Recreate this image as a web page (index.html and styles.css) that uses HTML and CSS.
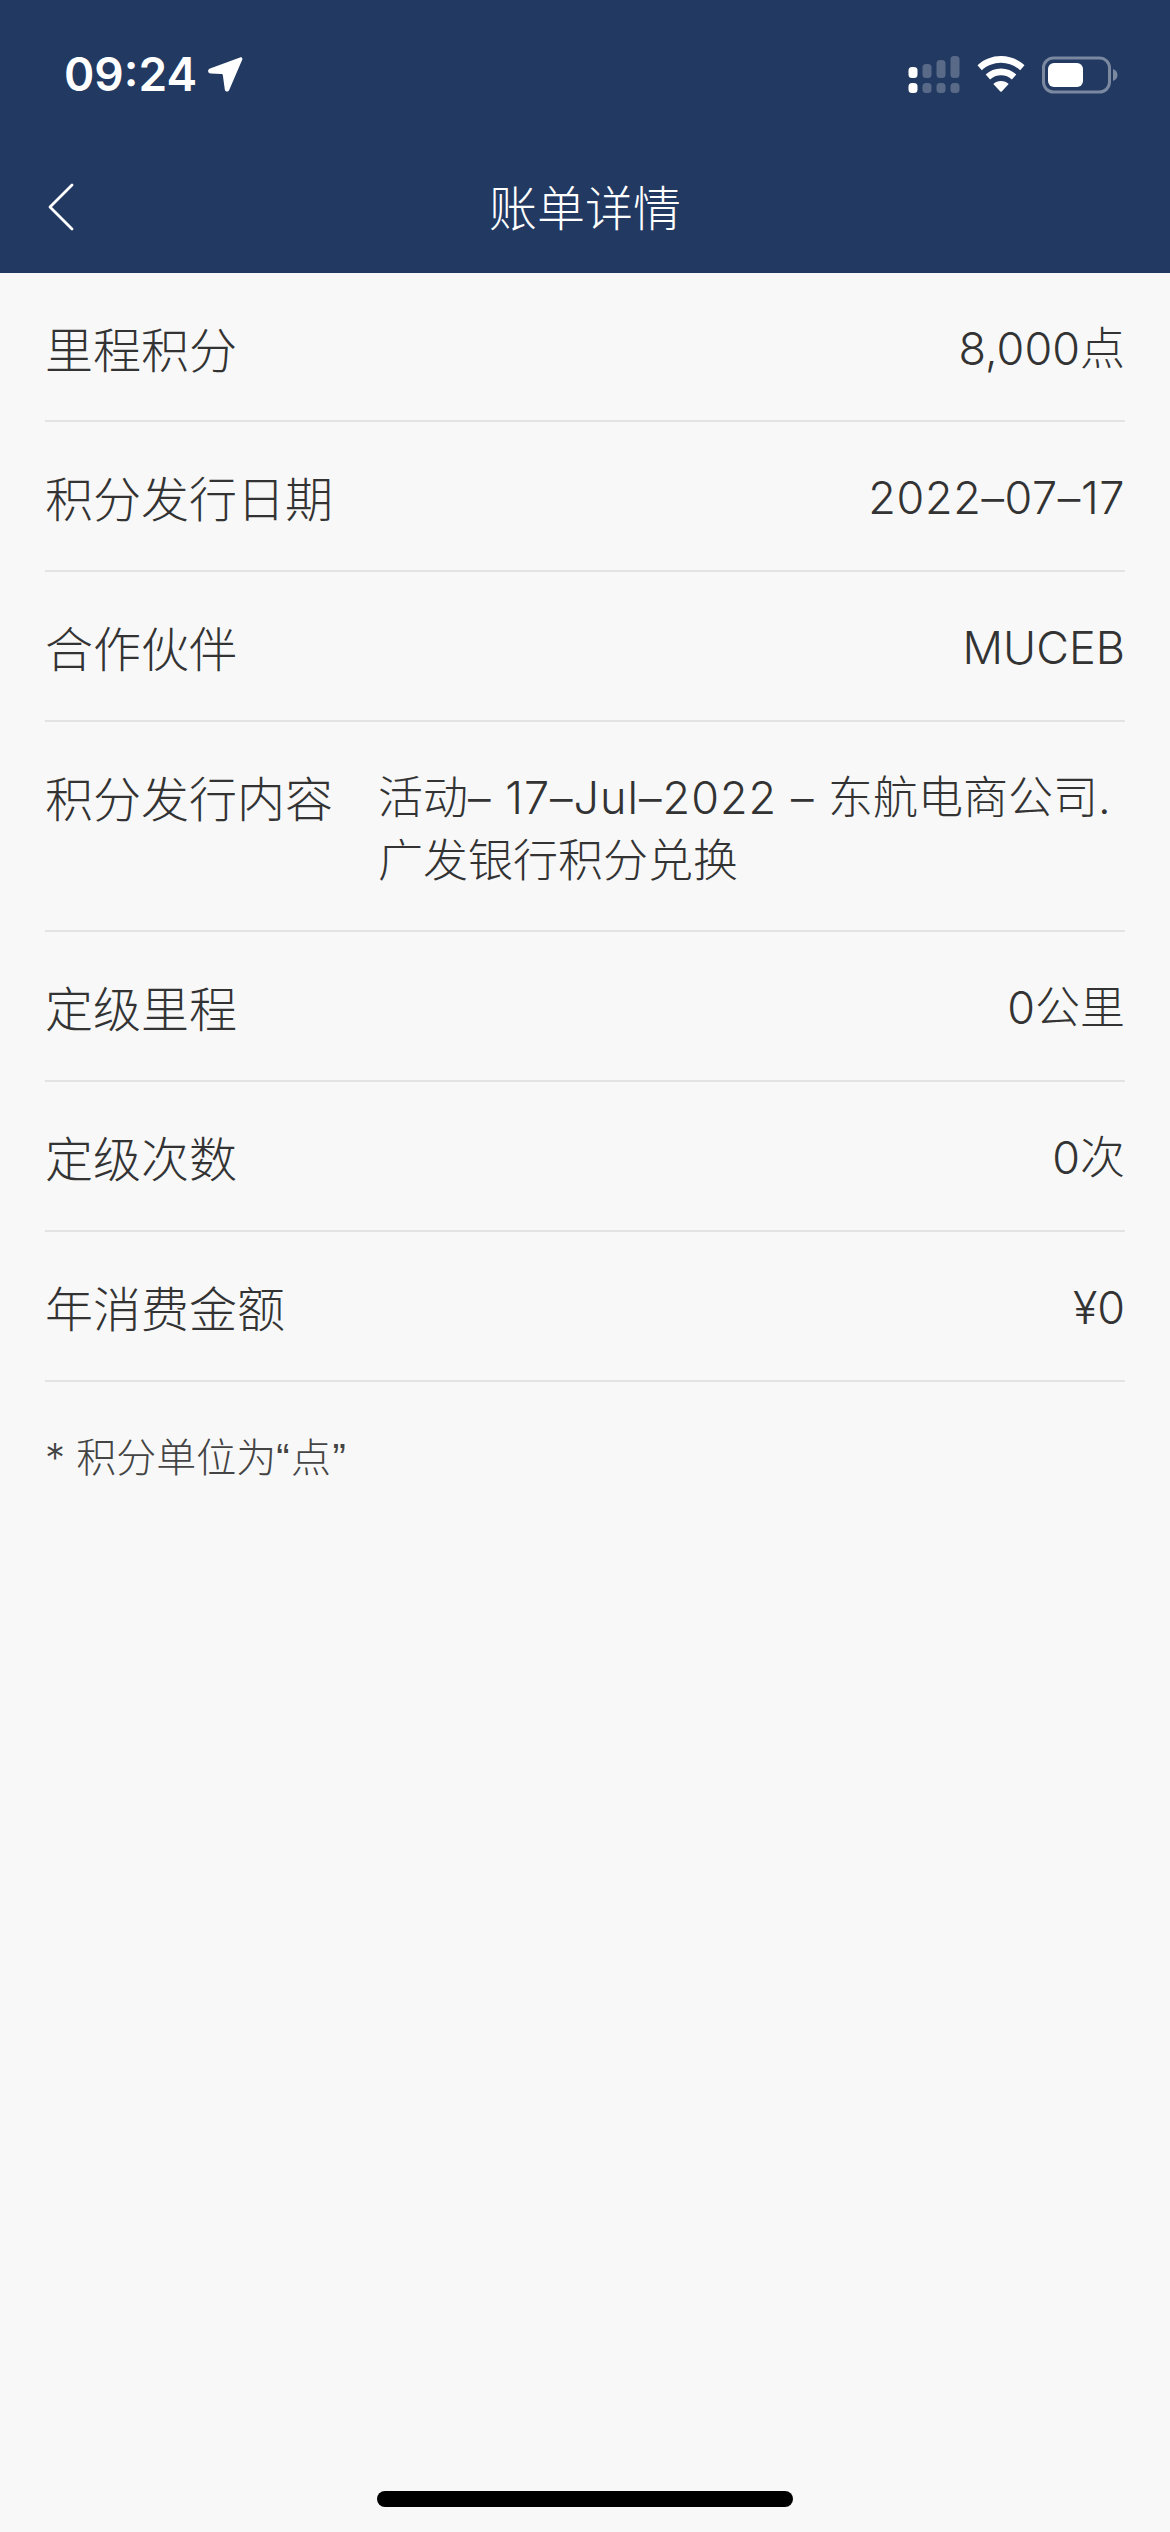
FILE: index.html
```html
<!DOCTYPE html>
<html lang="zh-CN">
	<head>
		<meta charset="utf-8">
		<title>账单详情</title>
		<meta name="viewport" content="width=device-width, initial-scale=1">
		<link rel="stylesheet" href="styles.css">
	</head>
	<body>
		<div class="page">
			<header class="top">
				<div class="status">
					<div class="clock">
						<span class="time">09:24</span>
						<svg class="arrow" width="36" height="36" viewBox="0 0 36 36" aria-hidden="true">
							<path d="M33 1.500 3 12.500c-2.800 1-2.400 5 .8 5.100l10.700.3c.8 0 1.200.4 1.300 1.200l2 14.300c.4 2.500 3.400 2.900 4.400.6L35.200 3.700C35.900 2.200 34.500.9 33 1.500Z" fill="#fff"/>
						</svg>
					</div>
					<div class="indicators">
						<svg width="52" height="38" viewBox="0 0 52 38" aria-hidden="true">
							<g fill="#fff" fill-opacity="0.25">
								<rect x="14.500" y="8" width="9" height="14" rx="3.500"/>
								<rect x="28.500" y="4" width="9" height="18" rx="3.500"/>
								<rect x="42.500" y="0" width="9" height="22" rx="3.500"/>
								<rect x="14.500" y="27" width="9" height="10" rx="3.500"/>
								<rect x="28.500" y="27" width="9" height="10" rx="3.500"/>
								<rect x="42.500" y="27" width="9" height="10" rx="3.500"/>
							</g>
							<g fill="#fff">
								<rect x="0.500" y="11" width="9" height="11" rx="3.500"/>
								<rect x="0.500" y="27" width="9" height="10" rx="3.500"/>
							</g>
						</svg>
						<svg class="wifi" width="48" height="36" viewBox="0 0 48 36" aria-hidden="true">
							<path d="M24 0C15 0 6.800 3.400 .5 9.200l4.300 5C10 9.500 16.700 6.700 24 6.700s14 2.800 19.200 7.500l4.300-5C41.200 3.400 33 0 24 0Z" fill="#fff"/>
							<path d="M24 12.500c-5.900 0-11.200 2.200-15.300 5.900l4.400 5c2.900-2.600 6.700-4.200 10.900-4.200s8 1.600 10.900 4.200l4.400-5c-4.100-3.700-9.400-5.900-15.300-5.900Z" fill="#fff"/>
							<path d="M24 25c-3 0-5.700 1.100-7.700 3l7 7.400c.4.400 1 .4 1.400 0l7-7.400c-2-1.900-4.700-3-7.700-3Z" fill="#fff"/>
						</svg>
						<svg class="battery" width="76" height="38" viewBox="0 0 76 38" aria-hidden="true">
							<rect x="1.500" y="2" width="66" height="34" rx="10" fill="none" stroke="#fff" stroke-opacity="0.4" stroke-width="3"/>
							<rect x="6" y="7" width="35" height="24" rx="6" fill="#fff"/>
							<path d="M71 13c2.800 1 4.500 3.300 4.500 6s-1.700 5-4.500 6Z" fill="#fff" fill-opacity="0.4"/>
						</svg>
					</div>
				</div>
				<nav class="bar">
					<svg class="back" width="28" height="48" viewBox="0 0 28 48" aria-hidden="true">
						<path d="M25 2 3 24l22 22" fill="none" stroke="#fff" stroke-width="2.800" stroke-linecap="round" stroke-linejoin="round"/>
					</svg>
					<h1 class="title">账单详情</h1>
				</nav>
			</header>
			<main class="details">
				<div class="row first"><span class="label">里程积分</span><span class="value">8,000点</span></div>
				<div class="row"><span class="label">积分发行日期</span><span class="value date">2022–07–17</span></div>
				<div class="row"><span class="label">合作伙伴</span><span class="value">MUCEB</span></div>
				<div class="row tall"><span class="label">积分发行内容</span><span class="value long">活动<span class="latin">– 17–Jul–2022 – </span>东航电商公司.<br>广发银行积分兑换</span></div>
				<div class="row"><span class="label">定级里程</span><span class="value">0公里</span></div>
				<div class="row"><span class="label">定级次数</span><span class="value">0次</span></div>
				<div class="row"><span class="label">年消费金额</span><span class="value">¥0</span></div>
				<p class="note">* 积分单位为<span class="quoted">“<span class="cjk">点</span>”</span></p>
			</main>
			<div class="home"></div>
		</div>
	</body>
</html>
```

FILE: styles.css
```css
html, body {
	margin: 0;
	padding: 0;
}
body {
	background: #f8f8f8;
	font-family: "Inter", "Noto Sans CJK SC", sans-serif;
	font-weight: 300;
	color: #333;
}
.page {
	height: 2532px;
	display: flex;
	flex-direction: column;
	overflow: hidden;
}

/* header */
.top {
	height: 273px;
	background: #223962;
	color: #fff;
}
.status {
	height: 150px;
	box-sizing: border-box;
	padding: 56px 52px 0 64px;
	display: flex;
	justify-content: space-between;
	align-items: flex-start;
}
.clock {
	display: flex;
	align-items: center;
	gap: 10px;
}
.time {
	font-size: 46px;
	line-height: 36px;
	font-weight: 600;
}
.indicators {
	display: flex;
	gap: 17px;
}
.bar {
	position: relative;
	height: 123px;
	display: flex;
	align-items: flex-start;
	justify-content: center;
}
.back {
	position: absolute;
	left: 47px;
	top: 33px;
}
.title {
	margin: 28px 0 0;
	font-size: 48px;
	line-height: 62px;
	font-weight: 300;
}

/* rows */
.details {
	padding: 0 45px;
}
.row {
	height: 150px;
	box-sizing: border-box;
	border-bottom: 2px solid #e3e3e3;
	display: flex;
	justify-content: space-between;
	align-items: center;
	padding-top: 3px;
	font-size: 48px;
	line-height: 63px;
}
.row.first {
	height: 149px;
}
.row.tall {
	height: 210px;
	align-items: flex-start;
	padding-top: 44px;
}
.label {
	margin-top: 4px;
}
.tall .label {
	margin-top: 2px;
}
.value {
	font-size: 45px;
}
.value.date {
	letter-spacing: 0.6px;
}
.value.long {
	width: 747px;
}
.value .latin {
	letter-spacing: 1px;
}
.label, .value {
	white-space: nowrap;
}
.note {
	margin: 0;
	padding-top: 47px;
	font-size: 40px;
	line-height: 52px;
	color: #444;
}
.quoted {
	font-family: "Liberation Sans", sans-serif;
	letter-spacing: 1.5px;
}
.quoted .cjk {
	font-family: "Noto Sans CJK SC", sans-serif;
}

/* home indicator */
.home {
	width: 416px;
	height: 16px;
	border-radius: 8px;
	background: #000;
	margin: auto auto 25px;
}
```
